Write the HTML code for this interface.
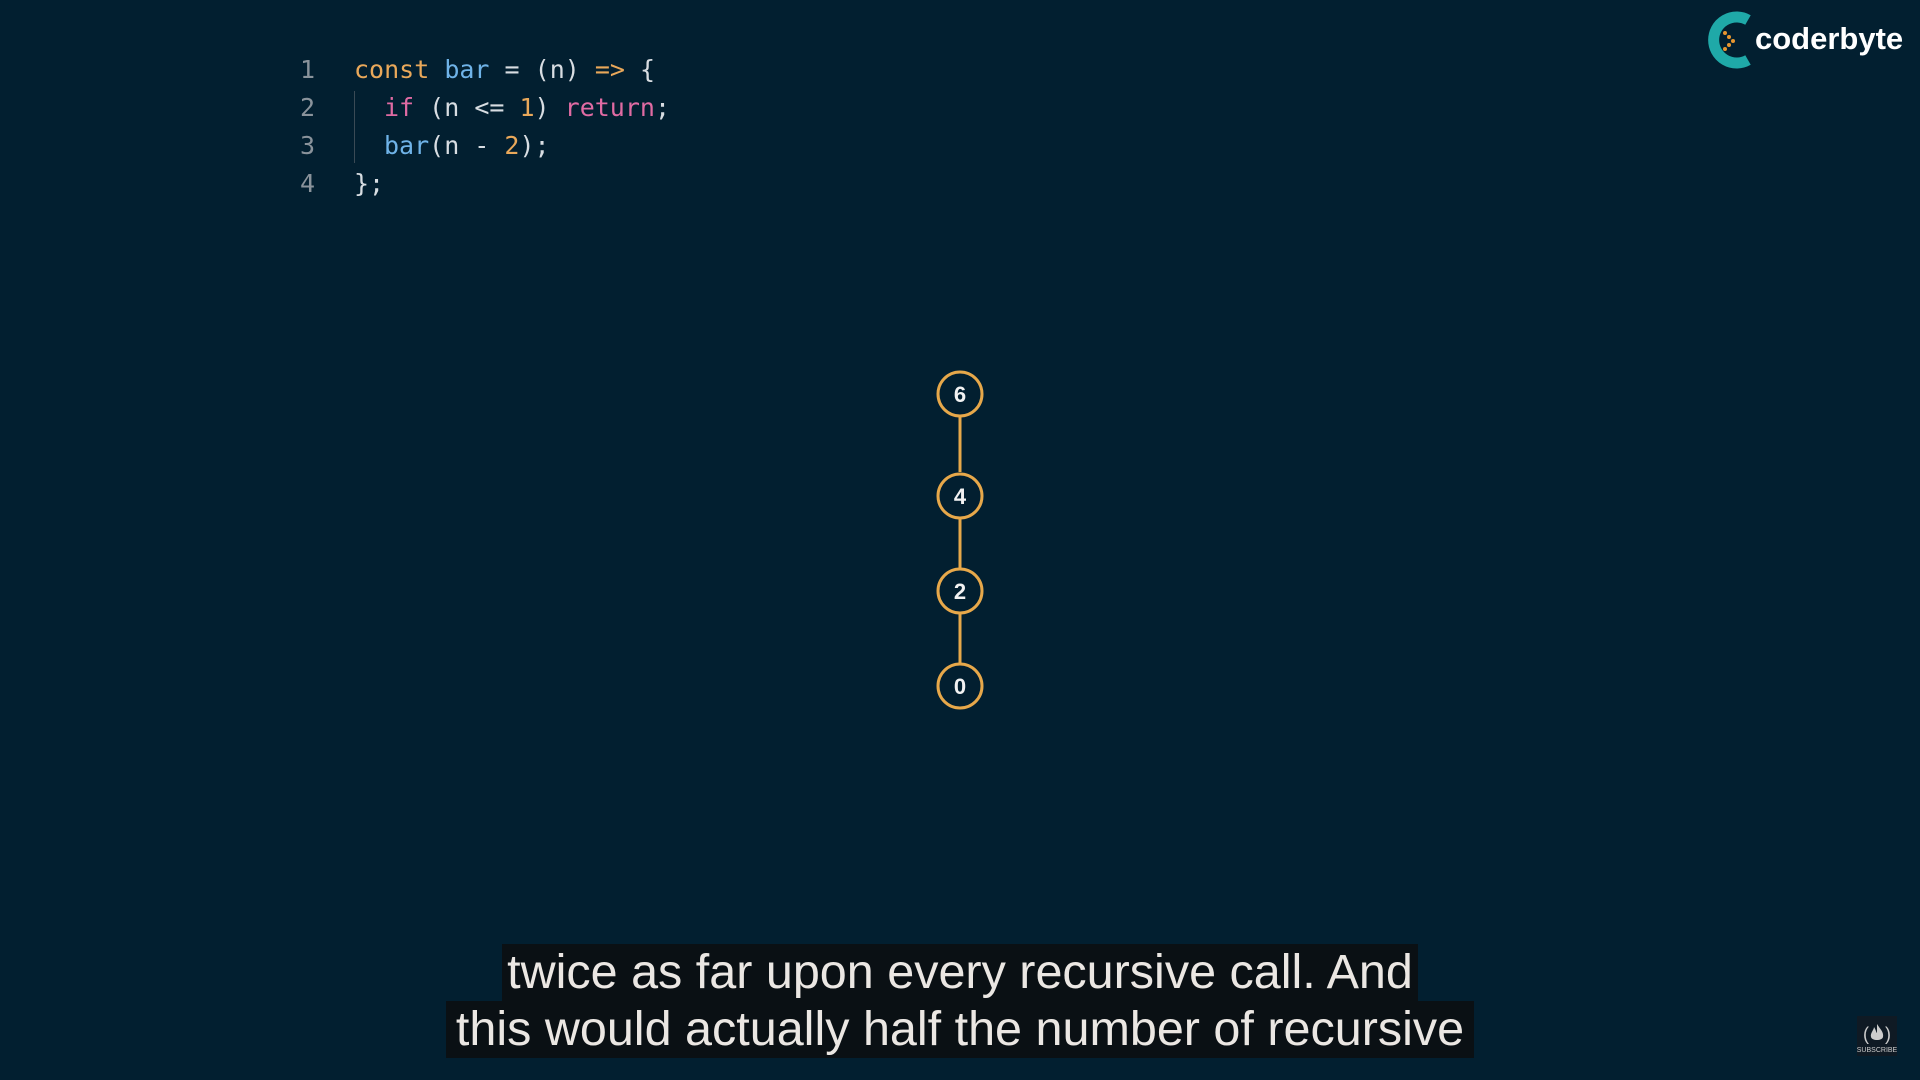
<!DOCTYPE html>
<html><head><meta charset="utf-8"><style>
html,body{margin:0;padding:0;}
body{width:1920px;height:1080px;background:#021f30;position:relative;overflow:hidden;font-family:"Liberation Sans",sans-serif;}
.code{position:absolute;left:290px;top:51px;font-family:"DejaVu Sans Mono","Liberation Mono",monospace;font-size:25px;color:#d8dde2;}
.ln{position:absolute;height:38px;line-height:38px;white-space:pre;}
.num{color:#8a939b;}
.k{color:#e9a85a}.f{color:#6fb3e8}.p{color:#e06ba3}.o{color:#e9a85a}
.guide{position:absolute;left:354px;top:91px;width:1px;height:72px;background:#3a4a55;}
.sub{position:absolute;left:0;width:1920px;text-align:center;}
.sub span{background:#0a1014;color:#ebe7e3;font-size:48.5px;line-height:57px;display:inline-block;height:57px;white-space:nowrap;}
</style></head><body>
<div class="code">
<div class="ln num" style="left:10px;top:0px">1</div>
<div class="ln num" style="left:10px;top:38px">2</div>
<div class="ln num" style="left:10px;top:76px">3</div>
<div class="ln num" style="left:10px;top:114px">4</div>
<div class="ln" style="left:64px;top:0px"><span class="k">const</span> <span class="f">bar</span> = (n) <span class="o">=&gt;</span> {</div>
<div class="ln" style="left:94px;top:38px"><span class="p">if</span> (n &lt;= <span class="o">1</span>) <span class="p">return</span>;</div>
<div class="ln" style="left:94px;top:76px"><span class="f">bar</span>(n - <span class="o">2</span>);</div>
<div class="ln" style="left:64px;top:114px">};</div>
</div>
<div class="guide"></div>

<svg style="position:absolute;left:0;top:0" width="1920" height="1080">
<g stroke="#e7a84a" stroke-width="3" fill="#021f30">
<line x1="960" y1="416" x2="960" y2="472"/>
<line x1="960" y1="518" x2="960" y2="568"/>
<line x1="960" y1="613" x2="960" y2="663"/>
<circle cx="960" cy="394" r="22"/>
<circle cx="960" cy="496" r="22"/>
<circle cx="960" cy="591" r="22"/>
<circle cx="960" cy="686" r="22"/>
</g>
<g fill="#f2f2f2" font-family="Liberation Sans,sans-serif" font-size="22" font-weight="bold" text-anchor="middle">
<text x="960" y="402">6</text><text x="960" y="504">4</text><text x="960" y="599">2</text><text x="960" y="694">0</text>
</g>
<path d="M1748 20 A23 23 0 1 0 1748 60" stroke="#1fa9a8" stroke-width="11" fill="none"/>
<g fill="#e7962f"><circle cx="1725" cy="33" r="2"/><circle cx="1729" cy="37" r="2"/><circle cx="1733" cy="41" r="2"/><circle cx="1729" cy="45" r="2"/><circle cx="1725" cy="49" r="2"/></g>
<text x="1755" y="49" font-family="Liberation Sans,sans-serif" font-weight="bold" font-size="31" fill="#fff">coderbyte</text>
<rect x="1857" y="1016" width="40" height="40" fill="#0f1a24"/>
<text x="1866" y="1040" text-anchor="middle" font-size="18" fill="#ccc" font-family="Liberation Sans,sans-serif">(</text>
<text x="1888" y="1040" text-anchor="middle" font-size="18" fill="#ccc" font-family="Liberation Sans,sans-serif">)</text>
<path d="M1877 1024 C1880 1029 1884 1032 1883 1037 C1882 1041 1872 1041 1871 1037 C1870 1033 1874 1030 1874 1027 C1876 1030 1876 1032 1877 1033 Z" fill="#ccc"/>
<text x="1877" y="1052" text-anchor="middle" font-size="7" fill="#ccc" font-family="Liberation Sans,sans-serif">SUBSCRIBE</text>
</svg>

<div class="sub" style="top:944px"><span style="width:916px">twice as far upon every recursive call. And</span></div>
<div class="sub" style="top:1001px"><span style="width:1028px">this would actually half the number of recursive</span></div>
</body></html>
